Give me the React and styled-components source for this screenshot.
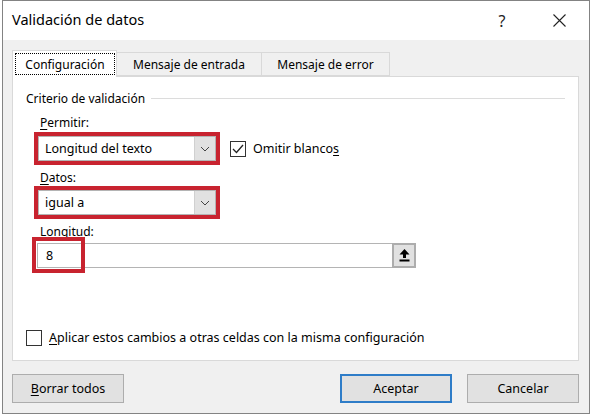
import React from "react";
import styled, { createGlobalStyle } from "styled-components";

const GlobalStyle = createGlobalStyle`
  html, body {
    margin: 0;
    padding: 0;
    background: #ffffff;
  }
  body {
    font-family: "Noto Sans", "Open Sans", sans-serif;
    font-size: 12px;
    color: #000;
  }
`;

const Window = styled.div`
  box-sizing: border-box;
  width: 588px;
  height: 414px;
  margin-left: 2px;
  border: 1px solid #838383;
  background: #f0f0f0;
  display: flex;
  flex-direction: column;
`;

const TitleBar = styled.div`
  height: 39px;
  background: #ffffff;
  display: flex;
  align-items: center;
  padding-left: 9px;
  flex-shrink: 0;
`;

const Title = styled.div`
  font-size: 14.5px;
  flex: 1;
  padding-bottom: 3px;
`;

const TitleButton = styled.div`
  width: ${(p) => p.w}px;
  height: 39px;
  margin-right: ${(p) => p.mr || 0}px;
  display: flex;
  align-items: center;
  justify-content: center;
  font-size: 16px;
  color: #222;
`;

const Body = styled.div`
  flex: 1;
  padding: 10px 10px 0 8px;
  display: flex;
  flex-direction: column;
`;

const TabStrip = styled.div`
  display: flex;
  align-items: flex-end;
  height: 26px;
  padding-left: 1px;
  position: relative;
  z-index: 1;
`;

const Tab = styled.div`
  box-sizing: border-box;
  width: ${(p) => p.w}px;
  height: ${(p) => (p.active ? 27 : 24)}px;
  margin-bottom: ${(p) => (p.active ? -1 : 0)}px;
  background: ${(p) => (p.active ? "#ffffff" : "#f0f0f0")};
  border: 1px solid #d9d9d9;
  border-bottom: ${(p) => (p.active ? "none" : "1px solid #d9d9d9")};
  border-left: ${(p) => (p.first || p.active ? "1px solid #d9d9d9" : "none")};
  display: flex;
  align-items: center;
  justify-content: center;
  padding: ${(p) => (p.active ? "2px 1px 2px 2px" : "0")};
  white-space: nowrap;
`;

const FocusRect = styled.div`
  box-sizing: border-box;
  width: 100%;
  height: 22px;
  border: 1px dotted #000;
  display: flex;
  align-items: center;
  justify-content: center;
`;

const Panel = styled.div`
  box-sizing: border-box;
  margin-left: 1px;
  width: 567px;
  height: 285px;
  background: #ffffff;
  border: 1px solid #d9d9d9;
  padding: 13px 12px 0 13px;
  display: flex;
  flex-direction: column;
`;

const GroupHeader = styled.div`
  display: flex;
  align-items: center;
  height: 16px;
  gap: 6px;
  padding-right: 1px;
  &::after {
    content: "";
    flex: 1;
    height: 1px;
    background: #dcdcdc;
  }
`;

const Group = styled.div`
  padding-left: 8px;
  display: flex;
  flex-direction: column;
`;

const Label = styled.div`
  height: 16px;
  line-height: 16px;
  margin: ${(p) => p.m || "0"};
  padding-left: 6px;
`;

const Key = styled.span`
  text-decoration: underline;
  text-underline-offset: 2px;
`;

const Row = styled.div`
  display: flex;
  align-items: center;
  gap: 10px;
`;

const RedBox = styled.div`
  box-sizing: border-box;
  border: 4px solid #c8232f;
  width: ${(p) => p.w}px;
  height: ${(p) => p.h}px;
`;

const Combo = styled.div`
  box-sizing: border-box;
  height: 100%;
  border: 1px solid #b4b4b4;
  background: #ffffff;
  display: flex;
  align-items: stretch;
`;

const ComboText = styled.div`
  flex: 1;
  display: flex;
  align-items: center;
  padding-left: 6px;
  font-size: 12.5px;
`;

const ComboButton = styled.div`
  width: 20px;
  background: #e1e1e1;
  border-left: 1px solid #d0d0d0;
  display: flex;
  align-items: center;
  justify-content: center;
`;

const CheckRow = styled.label`
  display: flex;
  align-items: center;
  gap: 7px;
  font-size: 12.5px;
`;

const Box = styled.div`
  box-sizing: border-box;
  width: 16px;
  height: 16px;
  border: 1px solid #333;
  background: #fff;
  display: flex;
  align-items: center;
  justify-content: center;
`;

const InputWrap = styled.div`
  position: relative;
  margin: 3px 0 0 3px;
  width: 379px;
  height: 25px;
`;

const Input = styled.div`
  box-sizing: border-box;
  height: 100%;
  border: 1px solid #b4b4b4;
  display: flex;
  align-items: stretch;
  background: #fff;
`;

const InputText = styled.div`
  flex: 1;
  display: flex;
  align-items: center;
  padding-left: 8px;
  font-size: 12.5px;
`;

const RefButton = styled.div`
  box-sizing: border-box;
  width: 24px;
  margin: -1px -1px -1px 0;
  background: #e1e1e1;
  border: 2px solid #adadad;
  display: flex;
  align-items: center;
  justify-content: center;
`;

const Mark = styled.div`
  position: absolute;
  left: -5px;
  top: -6px;
  width: 53px;
  height: 36px;
  box-sizing: border-box;
  border: 4px solid #c8232f;
  pointer-events: none;
`;

const Spacer = styled.div`
  flex: 1;
`;

const BottomCheck = styled(CheckRow)`
  margin-bottom: 14px;
`;

const Footer = styled.div`
  display: flex;
  align-items: center;
  padding: 13px 0 0 1px;
`;

const Button = styled.div`
  box-sizing: border-box;
  width: 112px;
  height: 29px;
  margin-left: ${(p) => p.ml || 0}px;
  background: #e1e1e1;
  border: ${(p) => (p.primary ? "2px solid #2f7dc8" : "1px solid #adadad")};
  display: flex;
  align-items: center;
  justify-content: center;
  font-size: 12.5px;
`;

const Chevron = () => (
  <svg width="10" height="6" viewBox="0 0 10 6">
    <path d="M1 1 L5 5 L9 1" fill="none" stroke="#444" strokeWidth="1" />
  </svg>
);

const Check = () => (
  <svg width="12" height="10" viewBox="0 0 12 10">
    <path d="M1 5 L4.5 8.5 L11 1" fill="none" stroke="#222" strokeWidth="1.3" />
  </svg>
);

const UploadIcon = () => (
  <svg width="11" height="13" viewBox="0 0 11 13">
    <path d="M5.5 0 L10.5 5.5 L7 5.5 L7 9 L4 9 L4 5.5 L0.5 5.5 Z" fill="#000" />
    <rect x="0.5" y="10.5" width="10" height="2" fill="#000" />
  </svg>
);

const CloseIcon = () => (
  <svg width="13" height="13" viewBox="0 0 13 13">
    <path d="M0.5 0.5 L12.5 12.5 M12.5 0.5 L0.5 12.5" stroke="#222" strokeWidth="1.1" />
  </svg>
);

const App = () => {
  return (
    <>
      <GlobalStyle />
      <Window>
        <TitleBar>
          <Title>Validación de datos</Title>
          <TitleButton w={40} mr={12}>?</TitleButton>
          <TitleButton w={50} mr={5}>
            <CloseIcon />
          </TitleButton>
        </TitleBar>
        <Body>
          <TabStrip>
            <Tab w={105} active first>
              <FocusRect>Configuración</FocusRect>
            </Tab>
            <Tab w={145}>Mensaje de entrada</Tab>
            <Tab w={128}>Mensaje de error</Tab>
          </TabStrip>
          <Panel>
            <GroupHeader>Criterio de validación</GroupHeader>
            <Group>
              <Label m="9px 0 1px 0">
                <Key>P</Key>ermitir:
              </Label>
              <Row>
                <RedBox w={186} h={33}>
                  <Combo>
                    <ComboText>Longitud del texto</ComboText>
                    <ComboButton>
                      <Chevron />
                    </ComboButton>
                  </Combo>
                </RedBox>
                <CheckRow>
                  <Box>
                    <Check />
                  </Box>
                  <span>
                    Omitir blanco<Key>s</Key>
                  </span>
                </CheckRow>
              </Row>
              <Label m="5px 0 0 0">
                <Key>D</Key>atos:
              </Label>
              <RedBox w={186} h={33}>
                <Combo>
                  <ComboText>igual a</ComboText>
                  <ComboButton>
                    <Chevron />
                  </ComboButton>
                </Combo>
              </RedBox>
              <Label m="5px 0 0 0">
                <Key>L</Key>ongitud:
              </Label>
              <InputWrap>
                <Input>
                  <InputText>8</InputText>
                  <RefButton>
                    <UploadIcon />
                  </RefButton>
                </Input>
                <Mark />
              </InputWrap>
            </Group>
            <Spacer />
            <BottomCheck>
              <Box />
              <span>
                <Key>A</Key>plicar estos cambios a otras celdas con la misma configuración
              </span>
            </BottomCheck>
          </Panel>
          <Footer>
            <Button>
              <span>
                <Key>B</Key>orrar todos
              </span>
            </Button>
            <Button primary ml={216}>
              Aceptar
            </Button>
            <Button ml={15}>Cancelar</Button>
          </Footer>
        </Body>
      </Window>
    </>
  );
};

export default App;
